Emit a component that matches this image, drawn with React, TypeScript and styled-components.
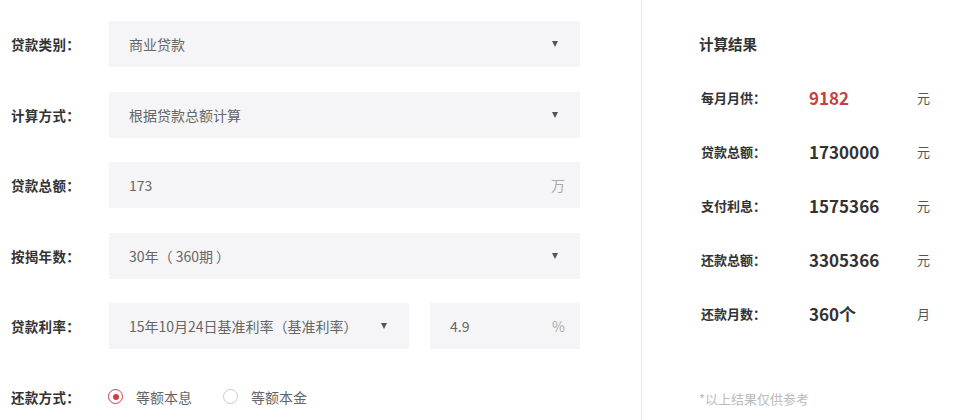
import React from "react";
import styled, { createGlobalStyle } from "styled-components";

const Global = createGlobalStyle`
  html, body { margin: 0; padding: 0; background: #fff; }
  body { font-family: "Noto Sans CJK SC", "Noto Sans", sans-serif; color: #333; }
`;

const Page = styled.div`
  display: flex;
  width: 963px;
  height: 420px;
  overflow: hidden;
`;

const Form = styled.div`
  width: 630px;
  padding: 21px 0 0 11px;
  border-right: 1px solid #ececec;
  display: flex;
  flex-direction: column;
  gap: 24.5px;
`;

const Row = styled.div`
  display: flex;
  align-items: center;
  height: 46px;
`;

const Label = styled.div`
  width: 98px;
  flex: none;
  font-size: 13.5px;
  font-weight: 700;
  color: #333;
  letter-spacing: 0.3px;
`;

const Pair = styled.div`
  display: flex;
  gap: 21px;
`;

const Field = styled.div<{ $w: number }>`
  width: ${(p) => p.$w}px;
  height: 46px;
  box-sizing: border-box;
  background: #f5f5f7;
  display: flex;
  align-items: center;
  justify-content: space-between;
  padding: 0 15px 0 20px;
  font-size: 14px;
  color: #666;
`;

const Arrow = styled.span`
  width: 0;
  height: 0;
  border-left: 3.5px solid transparent;
  border-right: 3.5px solid transparent;
  border-top: 6px solid #555;
  margin-right: 7px;
`;

const Suffix = styled.span`
  color: #aaa;
  font-size: 14px;
`;

const Radios = styled.div`
  display: flex;
  align-items: center;
  margin-left: -1px;
`;

const RadioItem = styled.label`
  display: flex;
  align-items: center;
  gap: 13px;
  font-size: 14px;
  color: #666;
  margin-right: 31px;
`;

const Dot = styled.span<{ $on?: boolean }>`
  width: 15px;
  height: 15px;
  box-sizing: border-box;
  border-radius: 50%;
  border: 1.5px solid ${(p) => (p.$on ? "#c9403f" : "#ccc")};
  display: flex;
  align-items: center;
  justify-content: center;
  &::after {
    content: "";
    width: 6px;
    height: 6px;
    border-radius: 50%;
    background: ${(p) => (p.$on ? "#c9403f" : "transparent")};
  }
`;

const Result = styled.div`
  flex: 1;
  padding: 33px 0 0 57px;
  display: flex;
  flex-direction: column;
`;

const Title = styled.div`
  font-size: 14.5px;
  font-weight: 700;
  color: #333;
  height: 22px;
  line-height: 22px;
  margin-bottom: 15px;
`;

const ResRow = styled.div`
  display: flex;
  align-items: center;
  height: 54px;
`;

const ResLabel = styled.div`
  width: 108px;
  padding-left: 2px;
  font-size: 13px;
  font-weight: 700;
  color: #333;
`;

const ResValue = styled.div<{ $red?: boolean }>`
  width: 108px;
  font-size: 17px;
  font-weight: 700;
  color: ${(p) => (p.$red ? "#c9403f" : "#333")};
`;

const Unit = styled.div`
  font-size: 13px;
  color: #555;
`;

const Note = styled.div`
  margin-top: 49px;
  font-size: 13px;
  color: #bbb;
`;

const rows = [
  { l: "每月月供：", v: "9182", u: "元", red: true },
  { l: "贷款总额：", v: "1730000", u: "元" },
  { l: "支付利息：", v: "1575366", u: "元" },
  { l: "还款总额：", v: "3305366", u: "元" },
  { l: "还款月数：", v: "360个", u: "月" },
];

export default function App() {
  return (
    <Page>
      <Global />
      <Form>
        <Row>
          <Label>贷款类别：</Label>
          <Field $w={471}>
            <span>商业贷款</span>
            <Arrow />
          </Field>
        </Row>
        <Row>
          <Label>计算方式：</Label>
          <Field $w={471}>
            <span>根据贷款总额计算</span>
            <Arrow />
          </Field>
        </Row>
        <Row>
          <Label>贷款总额：</Label>
          <Field $w={471}>
            <span>173</span>
            <Suffix>万</Suffix>
          </Field>
        </Row>
        <Row>
          <Label>按揭年数：</Label>
          <Field $w={471}>
            <span>30年（ 360期 ）</span>
            <Arrow />
          </Field>
        </Row>
        <Row>
          <Label>贷款利率：</Label>
          <Pair>
            <Field $w={300}>
              <span>15年10月24日基准利率（基准利率）</span>
              <Arrow />
            </Field>
            <Field $w={150}>
              <span>4.9</span>
              <Suffix>%</Suffix>
            </Field>
          </Pair>
        </Row>
        <Row>
          <Label>还款方式：</Label>
          <Radios>
            <RadioItem>
              <Dot $on />
              等额本息
            </RadioItem>
            <RadioItem>
              <Dot />
              等额本金
            </RadioItem>
          </Radios>
        </Row>
      </Form>
      <Result>
        <Title>计算结果</Title>
        {rows.map((r) => (
          <ResRow key={r.l}>
            <ResLabel>{r.l}</ResLabel>
            <ResValue $red={r.red}>{r.v}</ResValue>
            <Unit>{r.u}</Unit>
          </ResRow>
        ))}
        <Note>*以上结果仅供参考</Note>
      </Result>
    </Page>
  );
}
